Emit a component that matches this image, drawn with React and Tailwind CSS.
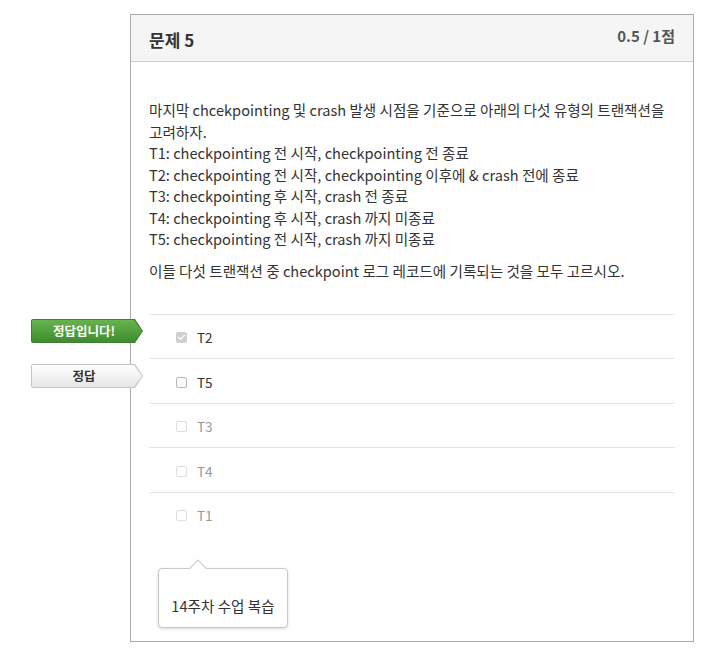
import { Check } from 'lucide-react';

const FONT = { fontFamily: '"Noto Sans CJK KR", "Noto Sans", sans-serif' };

// choices in display order; the first one was picked by the student
const CHOICES = [
  { id: 'T2', checked: true, active: true },
  { id: 'T5', checked: false, active: true },
  { id: 'T3', checked: false, active: false },
  { id: 'T4', checked: false, active: false },
  { id: 'T1', checked: false, active: false },
];

function Flag({ tone, children }) {
  if (tone === 'green') {
    return (
      <div className="w-[112px] h-[24px] p-px bg-[#3f7f2f] rounded-l-[2px] [clip-path:polygon(0_0,calc(100%-8px)_0,100%_50%,calc(100%-8px)_100%,0_100%)]">
        <div className="h-full bg-gradient-to-b from-[#66b34f] to-[#3f8d2e] [clip-path:polygon(0_0,calc(100%-8px)_0,100%_50%,calc(100%-8px)_100%,0_100%)] flex items-center justify-center pr-[6px] text-white text-[12.5px] font-bold">
          {children}
        </div>
      </div>
    );
  }
  return (
    <div className="w-[112px] h-[24px] p-px bg-[#c4c4c4] rounded-l-[2px] [clip-path:polygon(0_0,calc(100%-8px)_0,100%_50%,calc(100%-8px)_100%,0_100%)]">
      <div className="h-full bg-gradient-to-b from-white to-[#e6e6e6] [clip-path:polygon(0_0,calc(100%-8px)_0,100%_50%,calc(100%-8px)_100%,0_100%)] flex items-center justify-center pr-[6px] text-[#333] text-[12.5px] font-bold">
        {children}
      </div>
    </div>
  );
}

function ChoiceRow({ choice }) {
  return (
    <div className="h-[44.5px] border-t border-[#e4e4e4] flex items-center pl-[27px] pt-[3px]">
      {choice.checked ? (
        <span className="w-[11px] h-[11px] rounded-[2px] bg-[#cfcfcf] flex items-center justify-center">
          <Check size={9} strokeWidth={3.5} className="text-white" />
        </span>
      ) : (
        <span
          className={`w-[11px] h-[11px] rounded-[2px] border ${
            choice.active ? 'border-[#b8b8b8] bg-[#fafafa]' : 'border-[#dedede] bg-white'
          }`}
        />
      )}
      <span className={`ml-[10px] text-[13.5px] ${choice.active ? 'text-[#333]' : 'text-[#999]'}`}>
        {choice.id}
      </span>
    </div>
  );
}

export default function App() {
  return (
    <div style={FONT} className="relative w-[703px] h-[652px] bg-white pt-[14px] pl-[130px]">
      <div className="w-[564px] h-[628px] border border-[#aaa] flex flex-col">
        {/* header */}
        <div className="h-[47px] shrink-0 bg-[#f5f5f5] border-b border-[#cfcfcf] flex items-start justify-between px-[18px]">
          <h2 className="mt-[12px] text-[17px] font-bold text-[#333]">문제 5</h2>
          <span className="mt-[10px] text-[15px] font-bold text-[#555]">0.5 / 1점</span>
        </div>

        {/* question */}
        <div className="px-[18px] pt-[37px] text-[14.6px] leading-[21.5px] text-[#333]">
          <p>
            마지막 chcekpointing 및 crash 발생 시점을 기준으로 아래의 다섯 유형의 트랜잭션을
            <br />
            고려하자.
            <br />
            T1: checkpointing 전 시작, checkpointing 전 종료
            <br />
            T2: checkpointing 전 시작, checkpointing 이후에 &amp; crash 전에 종료
            <br />
            T3: checkpointing 후 시작, crash 전 종료
            <br />
            T4: checkpointing 후 시작, crash 까지 미종료
            <br />
            T5: checkpointing 전 시작, crash 까지 미종료
          </p>
          <p className="mt-[10.5px]">이들 다섯 트랜잭션 중 checkpoint 로그 레코드에 기록되는 것을 모두 고르시오.</p>

          <div className="mt-[32px]">
            {CHOICES.map((c) => (
              <ChoiceRow key={c.id} choice={c} />
            ))}
          </div>

          {/* feedback popover */}
          <div className="relative mt-[32px] ml-[9px] w-[130px] h-[60px] border border-[#c8c8c8] rounded-[4px] bg-white shadow-[0_1px_3px_rgba(0,0,0,0.15)] flex items-end justify-center pb-[11px]">
            <span className="absolute -top-[7px] left-[33px] w-[12px] h-[12px] bg-white border-t border-l border-[#c8c8c8] rotate-45" />
            <span className="text-[14.6px] text-[#333]">14주차 수업 복습</span>
          </div>
        </div>
      </div>

      {/* grading flags */}
      <div className="absolute left-[31px] top-[319px]">
        <Flag tone="green">정답입니다!</Flag>
      </div>
      <div className="absolute left-[31px] top-[364px]">
        <Flag tone="gray">정답</Flag>
      </div>
    </div>
  );
}
